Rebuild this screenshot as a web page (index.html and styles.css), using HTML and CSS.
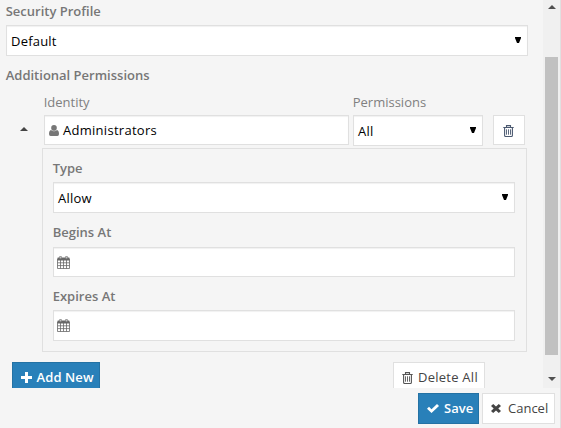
FILE: index.html
```
<!DOCTYPE html>
<html lang="en">
<head>
<meta charset="utf-8">
<title>Permissions</title>
<link rel="stylesheet" href="styles.css">
</head>
<body>
<svg class="defs" width="0" height="0">
  <symbol id="trash" viewBox="0 0 11 12"><path d="M3.5 2.5V.6h4v1.9M.3 2.5h10.4M1.6 3v7.5q0 1 1 1h5.8q1 0 1-1V3" fill="none" stroke="currentColor" stroke-width="1.1"/><path d="M3.5 4.3v5.4M5.5 4.3v5.4M7.5 4.3v5.4" fill="none" stroke="currentColor" stroke-width=".9"/></symbol>
  <symbol id="calendar" viewBox="0 0 13 13"><path d="M1 1.6h11q.6 0 .6.7V4.5H.4V2.3q0-.7.6-.7z" fill="currentColor"/><path d="M.5 3v9.5h12V3M.5 6.8h12M.5 9.6h12M3.5 4v8.5M6.5 4v8.5M9.5 4v8.5" fill="none" stroke="currentColor" stroke-width=".8"/><path d="M2.7.3h1.6v2.5H2.7zM8.7.3h1.6v2.5H8.7z" fill="#ddd" stroke="currentColor" stroke-width=".6"/></symbol>
</svg>
<div class="dialog">
  <div class="viewport">
    <main class="content">
      <div class="label">Security Profile</div>
      <div class="field select profile">Default<svg class="arrow" viewBox="0 0 6 6"><path d="M0 0h6v1L4 6H2L0 1z"/></svg></div>
      <div class="label additional">Additional Permissions</div>
      <div class="grid">
        <span></span><span class="head">Identity</span><span class="head">Permissions</span><span></span>
        <svg class="collapse" viewBox="0 0 8 4"><path d="M0 4l4-4 4 4z"/></svg>
        <div class="field identity"><svg class="user" viewBox="0 0 10 11"><circle cx="5" cy="2.9" r="2.8"/><path d="M2 5Q5 7.5 8 5q2 .4 2 4 0 2-1.6 2H1.6Q0 11 0 9q0-3.6 2-4z"/></svg>Administrators</div>
        <div class="field select">All<svg class="arrow" viewBox="0 0 6 6"><path d="M0 0h6v1L4 6H2L0 1z"/></svg></div>
        <div class="remove"><svg class="trash"><use href="#trash"/></svg></div>
      </div>
      <section class="panel">
        <div class="label">Type</div>
        <div class="field select">Allow<svg class="arrow" viewBox="0 0 6 6"><path d="M0 0h6v1L4 6H2L0 1z"/></svg></div>
        <div class="label">Begins At</div>
        <div class="field date"><svg class="calendar"><use href="#calendar"/></svg></div>
        <div class="label">Expires At</div>
        <div class="field date tall"><svg class="calendar"><use href="#calendar"/></svg></div>
      </section>
      <div class="actions">
        <div class="button primary add"><svg class="plus" viewBox="0 0 11 11"><path d="M4 0h3v4h4v3H7v4H4V7H0V4h4z"/></svg>Add New</div>
        <div class="button delete"><svg class="trash"><use href="#trash"/></svg>Delete All</div>
      </div>
    </main>
    <div class="scrollbar">
      <svg class="scroll-arrow" viewBox="0 0 8 4"><path d="M0 4l4-4 4 4z"/></svg>
      <div class="thumb"></div>
      <svg class="scroll-arrow down" viewBox="0 0 8 4"><path d="M0 0h8L4 4z"/></svg>
    </div>
  </div>
  <footer class="footer">
    <div class="button primary save"><svg class="check" viewBox="0 0 12 9"><path d="M0 4.8l2-2 2.5 2.4L10 0l2 2-7.5 7z"/></svg>Save</div>
    <div class="button cancel"><svg class="cross" viewBox="0 0 10 9"><path d="M2.2 0L5 2.6 7.8 0 10 2 7.3 4.5 10 7 7.8 9 5 6.4 2.2 9 0 7l2.7-2.5L0 2z"/></svg>Cancel</div>
  </footer>
</div>
</body>
</html>
```
FILE: styles.css
```
* { box-sizing: border-box; }
body { margin: 0; background: #f5f5f5; color: #000; font: 13px/18px "Open Sans", sans-serif; }
.defs { display: none; }
svg { display: block; flex: none; fill: currentColor; }
.dialog { width: 561px; height: 428px; border-right: 1px solid #e0e0e0; overflow: hidden; }
.viewport { height: 388px; display: flex; overflow: hidden; }
.content { width: 543px; padding: 2px 15px 0 6px; }
.label { height: 18px; color: #777; font-weight: 600; text-indent: -.3px; }
.field { height: 30px; display: flex; align-items: center; border: 1px solid #e0e0e0; background: #fff; box-shadow: inset 0 1px 1px rgba(0,0,0,.06); padding-left: 4px; letter-spacing: .2px; }
.identity { letter-spacing: .28px; }
.select { height: 31px; justify-content: space-between; padding-right: 6px; }
.arrow { width: 6px; height: 6px; margin-top: -1px; }
.profile { margin-top: 5px; }
.additional { margin-top: 10px; }
.grid { display: grid; grid-template-columns: 38px 305px 130px 32px; grid-template-rows: 22px 31px; margin-top: 9px; }
.grid > :nth-child(4n+3) { margin-left: 4px; width: 130px; }
.grid > :nth-child(4n+4) { margin-left: 14px; }
.head { color: #808080; text-indent: -.3px; }
.collapse { width: 8px; height: 4px; margin: 12px 0 0 14px; color: #444; }
.user { width: 10px; height: 11px; margin-right: 4px; color: #777; }
.remove { width: 32px; height: 30px; display: flex; align-items: center; justify-content: center; background: #fff; border: 1px solid #e0e0e0; }
.trash { width: 11px; height: 12px; color: #555; }
.remove .trash { color: #4b5970; margin: 1px 2px 0 0; }
.panel { width: 485px; height: 204px; margin: 2px 0 0 36px; border: 1px solid #e0e0e0; padding: 10px 11px 0 10px; }
.panel .field { margin: 5px 0 10px; }
.panel .date { margin-top: 6px; padding-left: 3px; }
.panel .tall { height: 31px; margin-top: 5px; }
.calendar { width: 13px; height: 13px; color: #686868; }
.actions { display: flex; justify-content: space-between; width: 473px; margin: 10px 0 0 6px; }
.button { height: 31px; display: flex; align-items: center; border: 1px solid #e0e0e0; background: #fff; color: #444; white-space: nowrap; padding: 0 0 1px 8px; }
.primary { background: #2980b9; border-color: #2472a4; color: #fff; font-weight: 600; }
.add { width: 88px; letter-spacing: .1px; }
.plus { width: 11px; height: 11px; margin-right: 4.5px; }
.delete { width: 92px; letter-spacing: .25px; }
.delete .trash { margin-right: 5px; margin-top: 1px; }
.scrollbar { width: 17px; height: 388px; background: #f0f0f0; display: flex; flex-direction: column; align-items: center; padding-top: 5px; color: #505050; }
.scroll-arrow { width: 8px; height: 4px; }
.thumb { width: 13px; height: 298px; margin: 48px 0 22px; background: #c1c1c1; }
.footer { display: flex; justify-content: flex-end; gap: 3px; padding: 5px 5px 0 0; }
.save { width: 61px; }
.check { width: 12px; height: 9px; margin-right: 5px; }
.cancel { width: 73px; }
.cross { width: 10px; height: 9px; margin: 1px 7px 0 0; }
```
